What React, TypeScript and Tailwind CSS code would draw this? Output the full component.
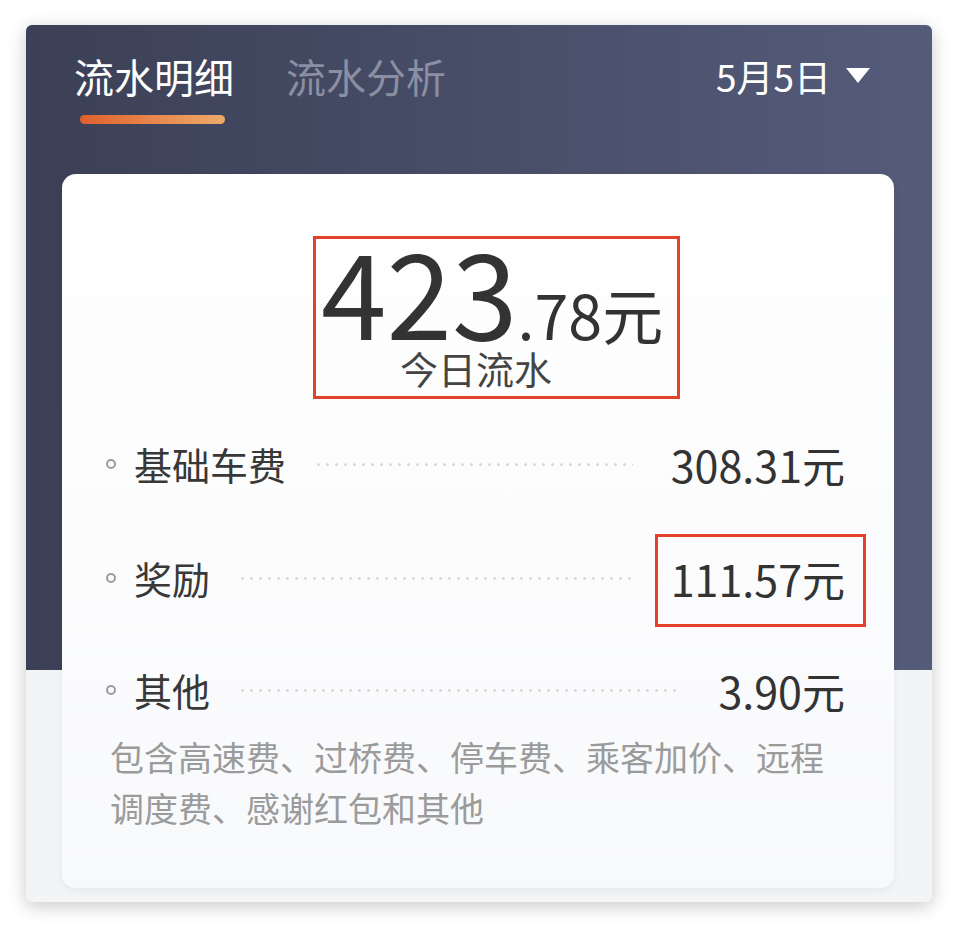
import React from "react";

const font = { fontFamily: '"Noto Sans CJK SC", "Noto Sans", sans-serif' };

function Row({ label, value, boxed }: { label: string; value: string; boxed?: boolean }) {
  return (
    <div className="flex items-center h-[56px] pl-[44px] pr-[49px]">
      <div className="w-[10px] h-[10px] rounded-full border-2 border-[#9c9c9c] shrink-0" />
      <div className="ml-[18px] text-[38px] leading-[56px] text-[#383838] shrink-0">{label}</div>
      <div className="flex-1 ml-[28px] mr-[38px] h-[3px] bg-[radial-gradient(circle,#d6d6d6_1px,transparent_1.6px)] bg-[length:9px_3px]" />
      {boxed ? (
        <div className="relative shrink-0">
          <div className="text-[43px] leading-[56px] text-[#333333]">{value}</div>
          <div className="absolute left-[-16px] right-[-21px] top-[-16px] bottom-[-21px] border-[3px] border-[#e4412b]" />
        </div>
      ) : (
        <div className="text-[43px] leading-[56px] text-[#333333] shrink-0">{value}</div>
      )}
    </div>
  );
}

export default function App() {
  return (
    <div className="w-[960px] h-[927px] bg-white pt-[25px] pl-[26px]" style={font}>
      <div className="w-[906px] h-[877px] rounded-[6px] overflow-hidden bg-[#f3f4f6] shadow-[0_4px_18px_rgba(0,0,0,0.22)]">
        <div className="h-[645px] bg-gradient-to-r from-[#3b4056] to-[#555c7a]">
          <div className="flex items-start pt-[31px] pl-[48px] pr-[62px]">
            <div className="flex flex-col">
              <div className="text-[40px] leading-[40px] text-white">流水明细</div>
              <div className="mt-[19px] ml-[6px] w-[145px] h-[9px] rounded-full bg-gradient-to-r from-[#df602d] to-[#ecaa6a]" />
            </div>
            <div className="ml-[52px] text-[40px] leading-[40px] text-[#8b8fa3]">流水分析</div>
            <div className="ml-auto flex items-center h-[40px]">
              <span className="text-[37px] leading-[40px] text-white">5月5日</span>
              <svg className="ml-[15px]" width="24" height="16" viewBox="0 0 24 16">
                <polygon points="0,0 24,0 12,15" fill="#ffffff" />
              </svg>
            </div>
          </div>
        </div>
        <div className="ml-[36px] -mt-[496px] w-[832px] h-[714px] rounded-[14px] bg-gradient-to-b from-white to-[#f8f9fb] shadow-[0_2px_8px_rgba(0,0,0,0.06)] pt-[62px]">
          <div className="ml-[251px] w-[367px] h-[163px] border-[3px] border-[#e4412b] flex flex-col">
            <div className="pl-[5px] h-[100px] flex items-baseline text-[#333333] leading-[100px]">
              <span className="text-[118px]">423</span>
              <span className="text-[61px]">.78元</span>
            </div>
            <div className="pl-[84px] mt-[10px] text-[38px] leading-[38px] text-[#444444]">今日流水</div>
          </div>
          <div className="mt-[37px]">
            <Row label="基础车费" value="308.31元" />
          </div>
          <div className="mt-[58px]">
            <Row label="奖励" value="111.57元" boxed />
          </div>
          <div className="mt-[56px]">
            <Row label="其他" value="3.90元" />
          </div>
          <div className="mt-[13px] pl-[48px] pr-[40px] text-[34px] leading-[51px] text-[#9b9b9b]">
            包含高速费、过桥费、停车费、乘客加价、远程调度费、感谢红包和其他
          </div>
        </div>
      </div>
    </div>
  );
}
